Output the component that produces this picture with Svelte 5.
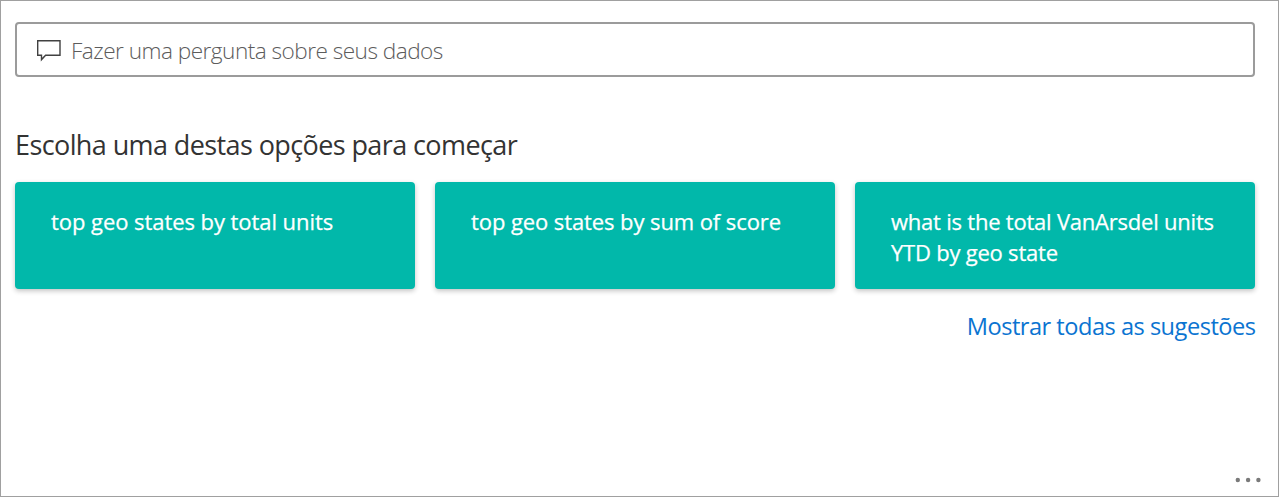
<script>
  const suggestions = [
    { text: 'top geo states by total units', spacing: '-0.06px' },
    { text: 'top geo states by sum of score', spacing: '-0.09px' },
    { text: 'what is the total VanArsdel units YTD by geo state', spacing: '-0.22px' },
  ];
</script>

<main class="tile">
  <label class="question">
    <svg width="26" height="24" viewBox="0 0 26 24" aria-hidden="true">
      <path d="M1.7 2.7H24V17.2H9.6L5.5 21.6V17.2H1.7Z" fill="none" stroke="#414141" stroke-width="1.4" />
    </svg>
    <span class="placeholder">Fazer uma pergunta sobre seus dados</span>
  </label>
  <h1><span>Escolha uma destas opções para começar</span></h1>
  <div class="cards">
    {#each suggestions as s}
      <button class="card"><span style="letter-spacing: {s.spacing}">{s.text}</span></button>
    {/each}
  </div>
  <a class="all" href="#all"><span>Mostrar todas as sugestões</span></a>
  <button class="more" aria-label="Mais">
    <svg width="26" height="6" viewBox="0 0 26 6">
      <circle cx="2.8" cy="3" r="2.2" /><circle cx="13.1" cy="3" r="2.2" /><circle cx="23.4" cy="3" r="2.2" />
    </svg>
  </button>
</main>

<style>
  .tile {
    box-sizing: border-box;
    width: 1279px;
    height: 497px;
    border: 1px solid #a0a0a0;
    padding: 21px 23px 13px 14px;
    background: #fff;
    display: flex;
    flex-direction: column;
    font-family: 'Open Sans', 'Noto Sans', sans-serif;
  }
  .question {
    box-sizing: border-box;
    height: 55px;
    border: 2px solid #9b9b9b;
    border-radius: 4px;
    display: flex;
    align-items: center;
    padding-left: 19px;
    gap: 9px;
  }
  .placeholder {
    padding-top: 3px;
    font-size: 22.6px;
    font-weight: 300;
    line-height: 32px;
    color: #5c5c5c;
    letter-spacing: -0.52px;
    white-space: nowrap;
  }
  h1 {
    margin: 48px 0 0;
    font-size: 27px;
    font-weight: 400;
    line-height: 40px;
    color: #333;
    letter-spacing: -0.6px;
  }
  .cards {
    margin-top: 17px;
    display: grid;
    grid-template-columns: repeat(3, 400px);
    gap: 20px;
  }
  .card {
    height: 107px;
    border: 0;
    border-radius: 4px;
    background: #01b8aa;
    box-shadow: 0 2px 5px rgba(0, 0, 0, 0.24);
    color: #fff;
    padding: 24px 36px 0;
    display: flex;
    align-items: flex-start;
    text-align: left;
    font: 400 22px/31px 'Open Sans', 'Noto Sans', sans-serif;
    -webkit-text-stroke: 0.25px #fff;
  }
  .all {
    align-self: flex-end;
    margin: 20px -0.5px 0 0;
    font-size: 23.6px;
    line-height: 34px;
    letter-spacing: -0.5px;
    color: #0b74d1;
    text-decoration: none;
  }
  .more {
    margin: auto -6px 0 0;
    align-self: flex-end;
    border: 0;
    padding: 0;
    background: none;
    display: flex;
    fill: #7a7a7a;
  }
</style>
